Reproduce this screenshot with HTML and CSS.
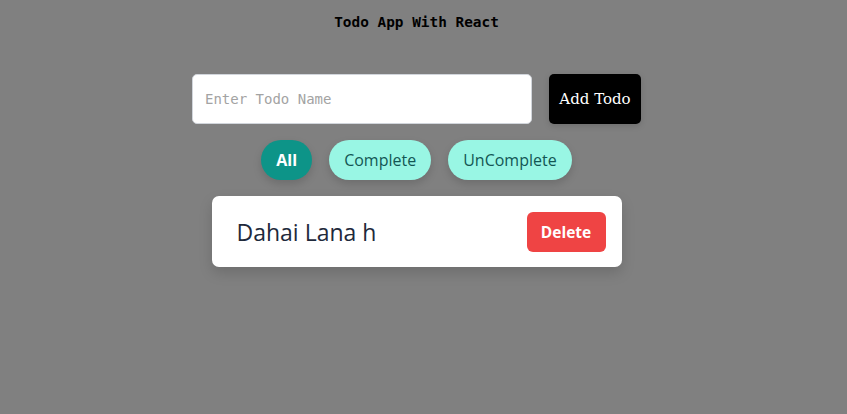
FILE: index.html
```html
<!DOCTYPE html>
<html>
<head>
<meta charset="utf-8">
<link rel="stylesheet" href="styles.css">
</head>
<body>
<div class="app">
  <h1 class="title">Todo App With React</h1>
  <div class="add-row">
    <input class="todo-input" type="text" placeholder="Enter Todo Name">
    <button class="add-btn">Add Todo</button>
  </div>
  <div class="filters">
    <button class="pill pill-active">All</button>
    <button class="pill">Complete</button>
    <button class="pill">UnComplete</button>
  </div>
  <div class="card">
    <span class="todo-name">Dahai Lana h</span>
    <button class="delete-btn">Delete</button>
  </div>
</div>
</body>
</html>
```
FILE: styles.css
```css
* { box-sizing: border-box; }
html, body { margin: 0; padding: 0; }
body {
  background: #808080;
  width: 847px;
  height: 414px;
  overflow: hidden;
}
.app {
  width: 833px;
  display: flex;
  flex-direction: column;
  align-items: center;
}
.title {
  margin: 14px 0 0 0;
  font-family: "DejaVu Sans Mono", "Liberation Mono", monospace;
  font-size: 14.4px;
  font-weight: bold;
  line-height: 16px;
  color: #000;
}
.add-row {
  margin-top: 44px;
  display: flex;
  gap: 17px;
}
.todo-input {
  width: 340px;
  height: 50px;
  border: 1px solid #d1d5db;
  border-radius: 5px;
  background: #fff;
  padding: 0 12px;
  font-family: "DejaVu Sans Mono", "Liberation Mono", monospace;
  font-size: 14px;
  outline: none;
}
.todo-input::placeholder { color: #a3a3a3; }
.add-btn {
  width: 92px;
  height: 50px;
  border: none;
  border-radius: 5px;
  background: #000;
  color: #fff;
  font-family: "DejaVu Serif", "Liberation Serif", serif;
  font-size: 15px;
  padding: 0;
  box-shadow: 0 2px 6px rgba(0,0,0,0.15);
}
.filters {
  margin-top: 16px;
  display: flex;
  gap: 17px;
}
.pill {
  height: 40px;
  border: none;
  border-radius: 20px;
  padding: 0 15px;
  background: #99f6e4;
  color: #135654;
  font-family: "Open Sans", "Noto Sans", sans-serif;
  font-size: 16px;
  box-shadow: 0 4px 8px rgba(0,0,0,0.15);
}
.pill-active {
  background: #0d9488;
  color: #fff;
  font-weight: bold;
}
.card {
  margin-top: 16px;
  width: 410px;
  height: 71px;
  background: #fff;
  border-radius: 7px;
  display: flex;
  align-items: center;
  justify-content: space-between;
  padding: 0 16px 0 25px;
  box-shadow: 0 6px 14px rgba(0,0,0,0.15);
}
.todo-name {
  font-family: "Open Sans", "Noto Sans", sans-serif;
  font-size: 23px;
  color: #1e293b;
}
.delete-btn {
  width: 79px;
  height: 40px;
  border: none;
  border-radius: 6px;
  background: #ef4444;
  color: #fff;
  font-family: "Open Sans", "Noto Sans", sans-serif;
  font-weight: bold;
  font-size: 15.5px;
  padding: 0;
}
```
